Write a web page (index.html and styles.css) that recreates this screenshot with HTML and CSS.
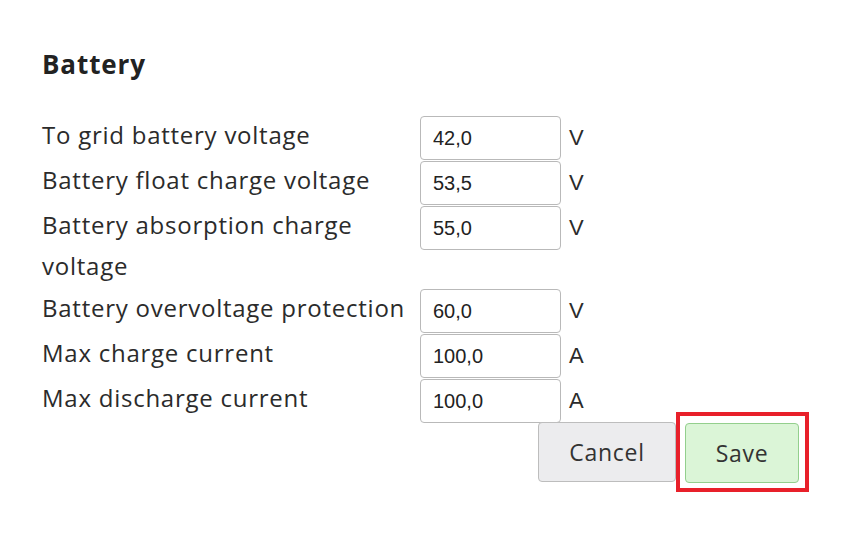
FILE: index.html
```html
<!DOCTYPE html>
<html>
<head>
<meta charset="utf-8">
<link rel="stylesheet" href="styles.css">
</head>
<body>
<div class="panel">
  <h2 class="title">Battery</h2>
  <div class="form">
    <label class="label">To grid battery voltage</label>
    <input class="field" value="42,0">
    <span class="unit">V</span>

    <label class="label">Battery float charge voltage</label>
    <input class="field" value="53,5">
    <span class="unit">V</span>

    <label class="label">Battery absorption charge voltage</label>
    <input class="field" value="55,0">
    <span class="unit">V</span>

    <label class="label">Battery overvoltage protection</label>
    <input class="field" value="60,0">
    <span class="unit">V</span>

    <label class="label">Max charge current</label>
    <input class="field" value="100,0">
    <span class="unit">A</span>

    <label class="label">Max discharge current</label>
    <input class="field" value="100,0">
    <span class="unit">A</span>
  </div>
  <div class="actions">
    <button class="btn btn-cancel">Cancel</button>
    <span class="highlight"><button class="btn btn-save">Save</button></span>
  </div>
</div>
</body>
</html>
```

FILE: styles.css
```css
html, body {
  margin: 0;
  padding: 0;
  background: #ffffff;
}

.panel {
  width: 767px;
  padding: 46px 0 0 42px;
  font-family: "Open Sans", "DejaVu Sans", sans-serif;
  color: #2b2b2b;
}

.title {
  margin: 0 0 34px 0;
  font-size: 26px;
  line-height: 36px;
  font-weight: 700;
  letter-spacing: 0.9px;
  color: #222;
}

.form {
  display: grid;
  grid-template-columns: 370px 141px auto;
  column-gap: 8px;
  row-gap: 1px;
  align-items: start;
}

.label {
  font-size: 24px;
  line-height: 41px;
  letter-spacing: 0.75px;
  color: #2b2b2b;
  padding-bottom: 2px;
  margin-top: -2px;
}

.field {
  box-sizing: border-box;
  width: 141px;
  height: 44px;
  border: 1px solid #b9b9b9;
  border-radius: 4px;
  padding: 0 12px;
  font-family: "Liberation Sans", Arial, sans-serif;
  font-size: 20px;
  color: #222;
  background: #fff;
}

.unit {
  font-family: "Liberation Sans", Arial, sans-serif;
  font-size: 22px;
  line-height: 44px;
  color: #2b2b2b;
}

.actions {
  display: flex;
  justify-content: flex-end;
  align-items: center;
  margin-top: -11px;
}

.btn {
  box-sizing: border-box;
  height: 60px;
  border-radius: 4px;
  font-family: "Open Sans", "DejaVu Sans", sans-serif;
  font-size: 23px;
  letter-spacing: 0.7px;
  color: #333;
  cursor: pointer;
  padding: 0;
}

.btn-cancel {
  width: 138px;
  background: #ececee;
  border: 1px solid #bdbdbd;
}

.highlight {
  display: flex;
  border: 4px solid #e8202a;
  padding: 7px 6px 5px 5px;
}

.btn-save {
  width: 114px;
  background: #dbf5d7;
  border: 1px solid #93cf8d;
}
```
